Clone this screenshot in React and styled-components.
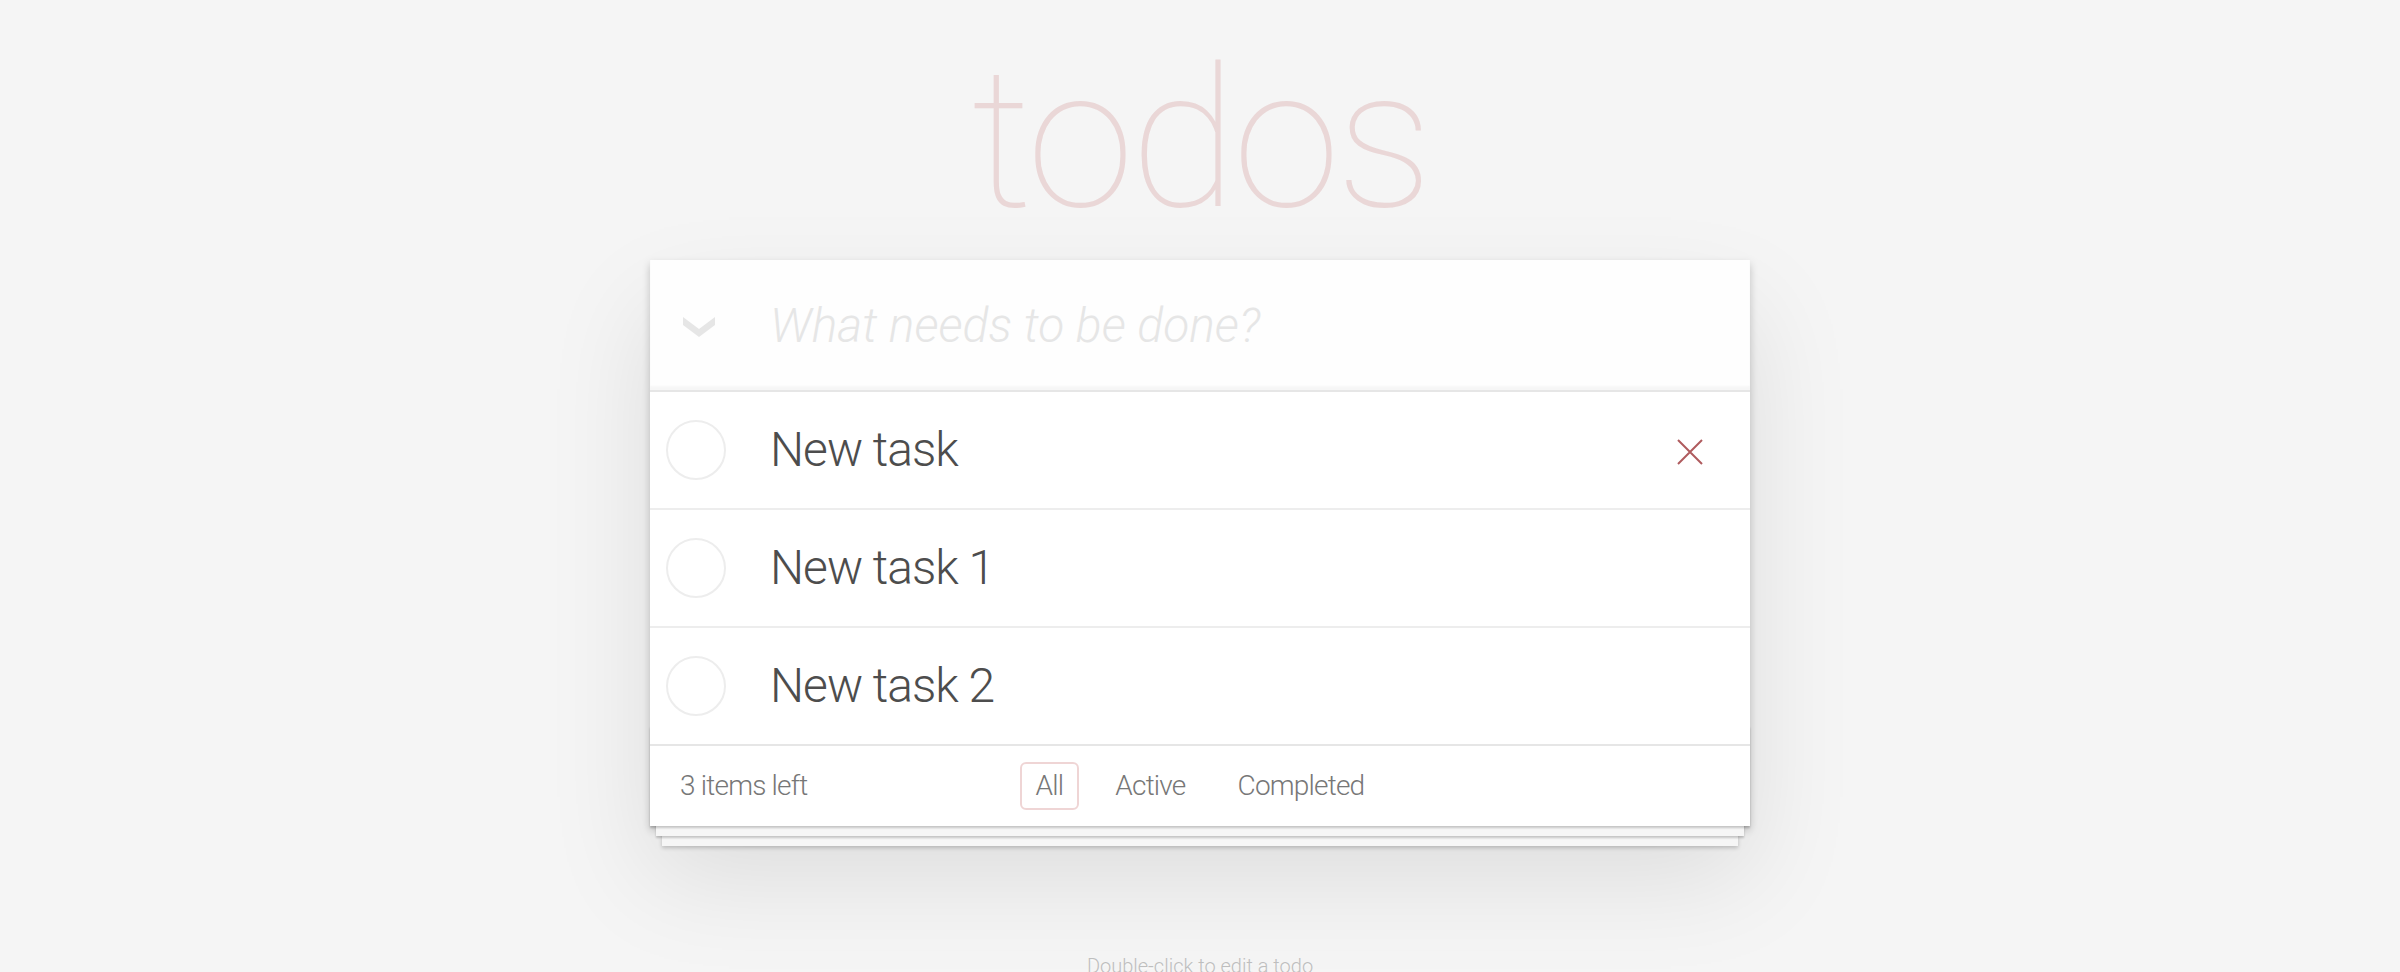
import React from 'react';
import styled, { createGlobalStyle } from 'styled-components';

const GlobalStyle = createGlobalStyle`
  html, body {
    margin: 0;
    padding: 0;
  }
  body {
    background: #f5f5f5;
    color: #4d4d4d;
    font-family: Roboto, "Liberation Sans", Arial, sans-serif;
    font-weight: 300;
    font-size: 28px;
    line-height: 1.4em;
    -webkit-font-smoothing: antialiased;
  }
`;

const Page = styled.section`
  width: 1100px;
  margin: 0 auto;
`;

const Title = styled.h1`
  margin: 0;
  height: 260px;
  box-sizing: border-box;
  padding-top: 40px;
  font-size: 195px;
  line-height: 200px;
  font-weight: 100;
  text-align: center;
  color: rgba(175, 47, 47, 0.15);
  letter-spacing: -4px;
`;

const Card = styled.div`
  position: relative;
  background: #fff;
  box-shadow: 0 4px 8px 0 rgba(0, 0, 0, 0.2), 0 50px 100px 0 rgba(0, 0, 0, 0.1);
`;

const Header = styled.header`
  display: flex;
  align-items: center;
  height: 130px;
  background: rgba(0, 0, 0, 0.003);
  box-shadow: inset 0 -4px 2px rgba(0, 0, 0, 0.03);
`;

const ToggleAll = styled.label`
  display: flex;
  align-items: center;
  width: 120px;
  height: 100%;
  box-sizing: border-box;
  padding-left: 33px;
  padding-top: 4px;
  flex-shrink: 0;
`;

const NewTodo = styled.input`
  flex: 1;
  height: 100%;
  border: none;
  outline: none;
  background: transparent;
  padding: 0 32px 0 0;
  margin: 0;
  font-family: inherit;
  font-size: 48px;
  font-weight: 300;
  color: #4d4d4d;

  &::placeholder {
    font-style: italic;
    font-weight: 300;
    color: #e6e6e6;
  }
`;

const List = styled.ul`
  margin: 0;
  padding: 0;
  list-style: none;
  border-top: 2px solid #e6e6e6;
  position: relative;
  z-index: 2;
`;

const Item = styled.li`
  display: flex;
  align-items: center;
  height: 116px;
  border-bottom: 2px solid #ededed;

  &:last-child {
    border-bottom: none;
  }
`;

const Toggle = styled.span`
  width: 60px;
  height: 60px;
  box-sizing: border-box;
  margin-left: 16px;
  border: 2px solid #ededed;
  border-radius: 50%;
  flex-shrink: 0;
`;

const ItemLabel = styled.label`
  margin-left: 44px;
  font-size: 48px;
  line-height: 56px;
  letter-spacing: -1px;
  color: #4d4d4d;
  flex: 1;
`;

const Destroy = styled.button`
  display: flex;
  align-items: center;
  justify-content: center;
  width: 26px;
  height: 26px;
  margin: 4px 47px 0 0;
  padding: 0;
  border: none;
  background: none;
  color: #af5b5e;
  cursor: pointer;
`;

const Footer = styled.footer`
  position: relative;
  display: grid;
  grid-template-columns: 1fr auto 1fr;
  align-items: center;
  height: 80px;
  padding: 0 30px;
  border-top: 2px solid #e6e6e6;
  color: #777;
  font-size: 28px;
  letter-spacing: -0.8px;

  &::before {
    content: '';
    position: absolute;
    right: 0;
    bottom: 0;
    left: 0;
    height: 100px;
    pointer-events: none;
    box-shadow: 0 2px 2px rgba(0, 0, 0, 0.2),
      0 16px 0 -6px #f6f6f6,
      0 18px 2px -6px rgba(0, 0, 0, 0.2),
      0 32px 0 -12px #f6f6f6,
      0 34px 4px -12px rgba(0, 0, 0, 0.2);
  }
`;

const Count = styled.span`
  justify-self: start;
`;

const Filters = styled.ul`
  display: flex;
  gap: 8px;
  margin: 0;
  padding: 0;
  list-style: none;
`;

const FilterLink = styled.a`
  display: block;
  margin: 0 6px;
  padding: 6px 14px;
  line-height: 32px;
  border: 2px solid ${(p) => (p.$selected ? 'rgba(175, 47, 47, 0.2)' : 'transparent')};
  border-radius: 6px;
  color: inherit;
  text-decoration: none;
`;

const Info = styled.footer`
  margin-top: 130px;
  color: #bfbfbf;
  font-size: 20px;
  line-height: 1;
  text-align: center;
  text-shadow: 0 2px 0 rgba(255, 255, 255, 0.5);

  p {
    margin: 0;
  }
`;

const Chevron = () => (
  <svg width="32" height="20" viewBox="0 0 32 20">
    <path d="M0 0 L16 12 L32 0 L32 8 L16 20 L0 8 Z" fill="#e6e6e6" />
  </svg>
);

const Cross = () => (
  <svg width="26" height="26" viewBox="0 0 26 26">
    <path d="M1 1 L25 25 M25 1 L1 25" stroke="currentColor" strokeWidth="2" />
  </svg>
);

const todos = [
  { id: 1, title: 'New task', hover: true },
  { id: 2, title: 'New task 1' },
  { id: 3, title: 'New task 2' },
];

const filters = ['All', 'Active', 'Completed'];

const App = () => {
  return (
    <>
      <GlobalStyle />
      <Page>
        <Title>todos</Title>
        <Card>
          <Header>
            <ToggleAll>
              <Chevron />
            </ToggleAll>
            <NewTodo placeholder="What needs to be done?" />
          </Header>
          <List>
            {todos.map((todo) => (
              <Item key={todo.id}>
                <Toggle />
                <ItemLabel>{todo.title}</ItemLabel>
                {todo.hover && (
                  <Destroy>
                    <Cross />
                  </Destroy>
                )}
              </Item>
            ))}
          </List>
          <Footer>
            <Count>3 items left</Count>
            <Filters>
              {filters.map((f) => (
                <li key={f}>
                  <FilterLink href="#" $selected={f === 'All'}>
                    {f}
                  </FilterLink>
                </li>
              ))}
            </Filters>
            <span />
          </Footer>
        </Card>
        <Info>
          <p>Double-click to edit a todo</p>
        </Info>
      </Page>
    </>
  );
};

export default App;
